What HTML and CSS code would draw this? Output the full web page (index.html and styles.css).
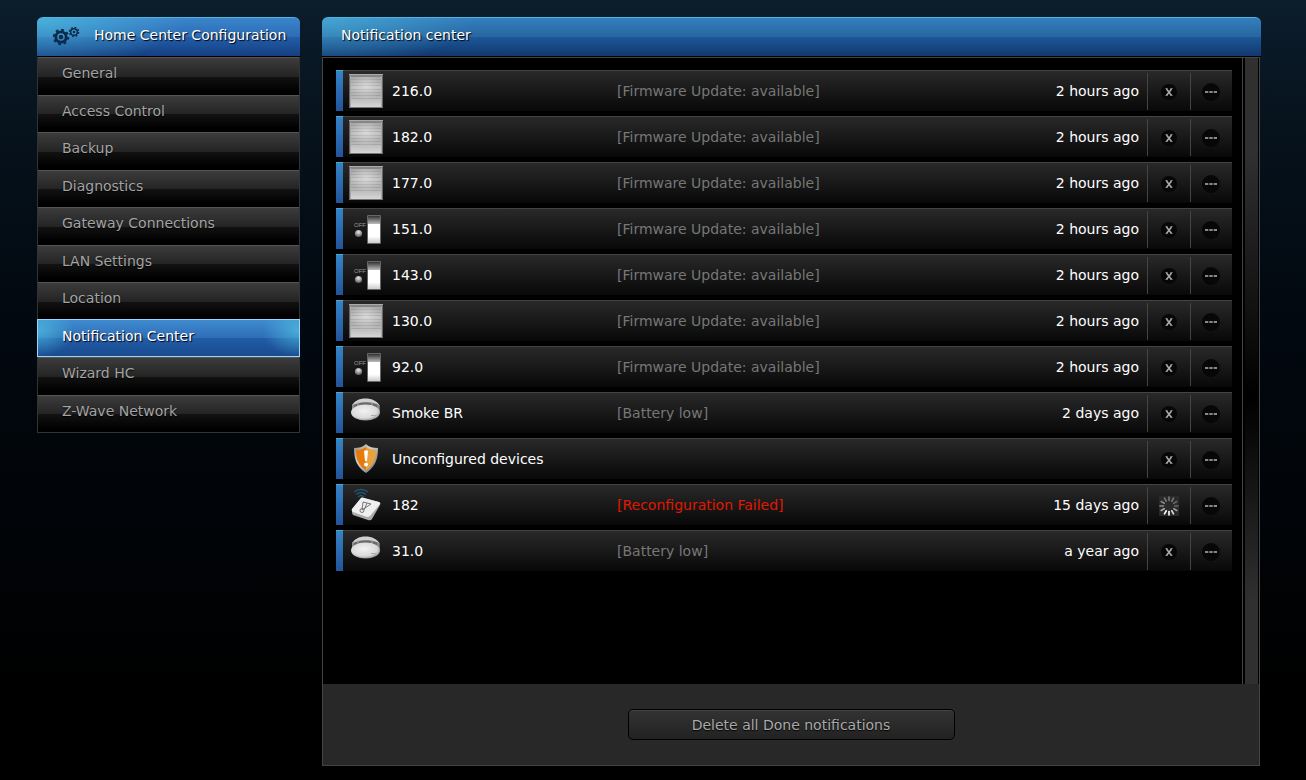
FILE: index.html
```html
<!DOCTYPE html>
<html lang="en">
<head>
<meta charset="utf-8">
<title>Home Center Configuration</title>
<link rel="stylesheet" href="styles.css">
</head>
<body>
<svg class="defs" aria-hidden="true">
  <defs>
    <linearGradient id="blind" x1="0" y1="0" x2="0" y2="1">
      <stop offset="0" stop-color="#a5a5a5"/><stop offset=".35" stop-color="#c0c0c0"/><stop offset=".6" stop-color="#b0b0b0"/><stop offset="1" stop-color="#d6d6d6"/>
    </linearGradient>
    <radialGradient id="shine" cx=".5" cy=".3" r=".5">
      <stop offset="0" stop-color="#fff" stop-opacity=".4"/><stop offset="1" stop-color="#fff" stop-opacity="0"/>
    </radialGradient>
    <linearGradient id="rocker" x1="0" y1="0" x2="0" y2="1">
      <stop offset="0" stop-color="#333"/><stop offset=".28" stop-color="#b5b5b5"/><stop offset=".31" stop-color="#fff"/><stop offset=".75" stop-color="#fff"/><stop offset="1" stop-color="#ccc"/>
    </linearGradient>
    <radialGradient id="led" cx=".5" cy=".3" r=".7">
      <stop offset="0" stop-color="#eee"/><stop offset="1" stop-color="#555"/>
    </radialGradient>
    <radialGradient id="dome" cx=".45" cy=".4" r=".6">
      <stop offset="0" stop-color="#f2f2f2"/><stop offset=".75" stop-color="#dadada"/><stop offset="1" stop-color="#999"/>
    </radialGradient>
    <linearGradient id="rim" x1="0" y1="0" x2="1" y2="1">
      <stop offset="0" stop-color="#888"/><stop offset=".4" stop-color="#d2d2d2"/><stop offset="1" stop-color="#666"/>
    </linearGradient>
    <symbol id="i-blind" viewBox="0 0 34 34">
      <rect width="34" height="34" fill="#777"/>
      <rect width="34" height="1" fill="#aaa"/>
      <rect x="1" y="1" width="32" height="2" fill="#8a8487"/>
      <rect x="2" y="3" width="30" height="30" fill="url(#blind)"/>
      <path d="M2 5.5h30M2 8.5h30M2 11.5h30M2 15.5h30M2 18.5h30M2 21.5h30M2 24.5h30" stroke="#888" stroke-opacity=".4"/>
      <path d="M.5 1v32M33.5 1v32" stroke="#666"/><path d="M1.5 2v31M32.5 2v31" stroke="#aaa"/>
      <rect x="2" y="3" width="30" height="30" fill="url(#shine)"/>
    </symbol>
    <symbol id="i-switch" viewBox="0 -2 34 34">
      <text x="5" y="13" font-family="Liberation Sans, sans-serif" font-size="6" fill="#999">OFF</text>
      <circle cx="9.500" cy="19.500" r="3.600" fill="url(#led)"/>
      <rect x="18" y="1" width="14" height="29" rx="1" fill="#666"/>
      <rect x="19" y="2" width="12" height="27" fill="url(#rocker)"/>
    </symbol>
    <symbol id="i-smoke" viewBox="0 -2 34 34">
      <path d="M3 13V8C5 3 10 1 16.500 1S28 3 31 8v5z" fill="#6a6a6a"/>
      <path d="M3 8C5 3 10 0.500 16.500 0.500S28 3 31 8C25 3 9 3 3 8z" fill="#d0d0d0"/>
      <path d="M4 6v6M9 4v5M23 4v5M29 6v6" stroke="#aaa"/>
      <ellipse cx="16.500" cy="14.500" rx="14.500" ry="8" fill="url(#dome)"/>
      <path d="M22 17.500h5" stroke="#aaa"/>
    </symbol>
    <symbol id="i-shield" viewBox="0 -2 34 34">
      <path d="M17 0C14 3 9 4 5 4c0 12 3 19 12 25C26 23 29 16 29 4 24 4 20 3 17 0z" fill="url(#rim)"/>
      <path d="M17 3c-3 2-6 3-10 3 0 10 3 16 10 20z" fill="#e8790b"/>
      <path d="M17 3c3 2 6 3 10 3 0 10-3 16-10 20z" fill="#e9a23b"/>
      <path d="M15 7q2-1.500 4 0l-1 10h-2z" fill="#fff"/><circle cx="17" cy="20.500" r="2" fill="#fff"/>
    </symbol>
    <symbol id="i-module" viewBox="0 -2 34 34">
      <g fill="none" stroke="#1f5674" stroke-width="1.300"><path d="M5 2q7-5 14 0M7 4.500q5-4 10 0M9 7q3-3 6 0"/></g>
      <path d="M3 19L12 8q1-1 3 0l15 4q2 1 1 3l-8 14q-1 2-4 1L4 25q-1-1-1-3z" fill="#aaa"/>
      <path d="M3 19L12 8q1-1 3 0l15 4q2 1 1 2l-10 12q-1 1-3 1L4 22q-2-1-1-3z" fill="#efefef"/>
      <g fill="none" stroke="#777"><circle cx="13" cy="20.500" r="2"/><path d="M13 20l1-8 8 2zM15 20l3-7"/></g>
    </symbol>
    <symbol id="i-close" viewBox="0 0 18 18">
      <circle cx="9" cy="9" r="8" fill="#070707"/>
      <path d="M6.500 6l5 6.500M11.500 6l-5 6.500" stroke="#aaa" stroke-width="1.600" fill="none"/>
      <path d="M5.500 5.500h2M10.500 5.500h2M5.500 12.500h2M10.500 12.500h2" stroke="#888" stroke-width="1"/>
    </symbol>
    <symbol id="i-more" viewBox="0 0 18 18">
      <circle cx="9" cy="9" r="9" fill="#070707"/>
      <path d="M3 9h12" stroke="#555" stroke-width="1"/>
      <path d="M3 9h3M7.500 9h3M12 9h3" stroke="#888" stroke-width="2"/>
    </symbol>
    <symbol id="i-spin" viewBox="0 0 20 20">
      <rect width="20" height="20" fill="#2a2a2a"/>
      <g stroke-width="1.600" stroke-linecap="round">
        <path d="M10 1v3.500" stroke="#777"/>
        <path d="M10 1v3.500" stroke="#777" transform="rotate(30 10 10)"/>
        <path d="M10 1v3.500" stroke="#666" transform="rotate(60 10 10)"/>
        <path d="M10 1v3.500" stroke="#666" transform="rotate(90 10 10)"/>
        <path d="M10 1v3.500" stroke="#999" transform="rotate(120 10 10)"/>
        <path d="M10 1v3.500" stroke="#ddd" transform="rotate(150 10 10)"/>
        <path d="M10 1v3.500" stroke="#fff" transform="rotate(180 10 10)"/>
        <path d="M10 1v3.500" stroke="#fff" transform="rotate(210 10 10)"/>
        <path d="M10 1v3.500" stroke="#aaa" transform="rotate(240 10 10)"/>
        <path d="M10 1v3.500" stroke="#888" transform="rotate(270 10 10)"/>
        <path d="M10 1v3.500" stroke="#888" transform="rotate(300 10 10)"/>
        <path d="M10 1v3.500" stroke="#777" transform="rotate(330 10 10)"/>
      </g>
    </symbol>
  </defs>
</svg>
<div class="page">
  <nav class="sidebar" aria-label="Home Center Configuration">
    <h2 class="bar">
      <svg class="gears" viewBox="0 0 28 20" aria-hidden="true" fill="none" stroke="#0c2c4b">
        <circle cx="9" cy="11" r="5.200" stroke-width="2.800"/>
        <circle cx="9" cy="11" r="7.200" stroke-width="2" stroke-dasharray="2.800 2.850"/>
        <circle cx="9" cy="11" r="2.300" fill="#0c2c4b" stroke="none"/>
        <circle cx="22" cy="6" r="3.300" stroke-width="1.500"/>
        <circle cx="22" cy="6" r="4.600" stroke-width="1.400" stroke-dasharray="1.800 1.810"/>
        <circle cx="22" cy="6" r="1.300" fill="#0c2c4b" stroke="none"/>
      </svg>
      <span>Home Center Configuration</span>
    </h2>
    <ul class="menu">
      <li><a href="#">General</a></li>
      <li><a href="#">Access Control</a></li>
      <li><a href="#">Backup</a></li>
      <li><a href="#">Diagnostics</a></li>
      <li><a href="#">Gateway Connections</a></li>
      <li><a href="#">LAN Settings</a></li>
      <li><a href="#">Location</a></li>
      <li><a href="#" class="active" aria-current="page">Notification Center</a></li>
      <li><a href="#">Wizard HC</a></li>
      <li><a href="#">Z-Wave Network</a></li>
    </ul>
  </nav>
  <main class="panel">
    <h1 class="bar wide">Notification center</h1>
    <div class="content">
      <ul class="list" id="list"></ul>
      <div class="track"></div>
    </div>
    <footer class="footer"><button type="button" class="delete">Delete all Done notifications</button></footer>
  </main>
</div>
<script src="app.js"></script>
</body>
</html>
```
FILE: app.js
```js
const FW = "[Firmware Update: available]";
const rows = [
  ["blind", "216.0", FW, "2 hours ago"],
  ["blind", "182.0", FW, "2 hours ago"],
  ["blind", "177.0", FW, "2 hours ago"],
  ["switch", "151.0", FW, "2 hours ago"],
  ["switch", "143.0", FW, "2 hours ago"],
  ["blind", "130.0", FW, "2 hours ago"],
  ["switch", "92.0", FW, "2 hours ago"],
  ["smoke", "Smoke BR", "[Battery low]", "2 days ago"],
  ["shield", "Unconfigured devices", "", ""],
  ["module", "182", "[Reconfiguration Failed]", "15 days ago", true],
  ["smoke", "31.0", "[Battery low]", "a year ago"]
];
document.getElementById("list").innerHTML = rows.map(([icon, name, msg, time, failed]) => `
  <li class="row">
    <svg class="device" aria-hidden="true"><use href="#i-${icon}"/></svg>
    <span class="name">${name}</span>
    <span class="msg${failed ? " failed" : ""}">${msg}</span>
    <time class="time">${time}</time>
    <button type="button" class="act" aria-label="${failed ? "Working" : "Dismiss"}"><svg class="${failed ? "spin" : "close"}"><use href="#i-${failed ? "spin" : "close"}"/></svg></button>
    <button type="button" class="act last" aria-label="More"><svg class="more"><use href="#i-more"/></svg></button>
  </li>`).join("");
```
FILE: styles.css
```css
* { box-sizing: border-box; }

body {
  margin: 0;
  background: #000 linear-gradient(#0c1d2c 0, #06121c 130px, #020911 300px, #000 700px) no-repeat;
  color: #fff;
  font: 14px/20px "DejaVu Sans", Verdana, sans-serif;
}

.defs { position: absolute; width: 0; height: 0; }

ul { list-style: none; margin: 0; padding: 0; }

.page {
  display: flex;
  align-items: flex-start;
  gap: 22px;
  min-height: 100vh;
  padding: 17px 45px 14px 37px;
}

.sidebar { flex: 0 0 263px; }

.bar {
  display: flex;
  align-items: center;
  height: 40px;
  margin: 0;
  padding: 0 12px 4px 15px;
  border-top: 1px solid #4fb4de;
  border-bottom: 1px solid #000;
  border-radius: 6px 6px 0 0;
  background:
    radial-gradient(150px 50px at 0 0, rgba(80, 195, 225, .7), transparent),
    linear-gradient(#3a85cc, #2d6cb3 50%, #225da9 51%, #163f80);
  font-size: 14px;
  font-weight: normal;
  text-shadow: 1px 1px 1px #001;
  white-space: nowrap;
}

.bar.wide {
  padding-left: 19px;
  background:
    radial-gradient(150px 50px at 0 0, rgba(80, 190, 225, .6), transparent),
    linear-gradient(#337fbf, #28669f 50%, #1c5797 51%, #12376f);
}

.gears { flex: none; width: 28px; height: 20px; margin: 2px 14px 0 0; }

.menu { border: 1px solid #333; border-top: 0; }

.menu a {
  display: block;
  height: 38px;
  padding: 5px 24px;
  border-top: 1px solid #555;
  background: linear-gradient(#3c3c3c, #242424 50%, #121212 51%, #000 90%);
  color: #a4a4a4;
  text-decoration: none;
  text-shadow: 0 1px 1px #000;
}

.menu li:nth-child(even) a { height: 37px; }

.menu a.active,
.menu li:nth-child(even) a.active {
  height: 38px;
  margin: -1px -1px 0;
  padding-top: 6px;
  border: 1px solid #9bd4f5;
  background:
    radial-gradient(36px 26px at 0 30%, rgba(80, 195, 225, .7), transparent),
    radial-gradient(36px 26px at 100% 30%, rgba(80, 195, 225, .7), transparent),
    linear-gradient(#3f8bd0, #2e6db7 50%, #215ca7 51%, #1a4b8f);
  color: #fff;
  text-shadow: 1px 1px 1px #001;
}

.panel {
  flex: 1;
  display: flex;
  flex-direction: column;
  align-self: stretch;
}

.content {
  flex: 1;
  display: flex;
  margin-right: 1px;
  border: 1px solid #444;
  border-bottom: 0;
  background: #000;
}

.list {
  flex: 1;
  display: flex;
  flex-direction: column;
  gap: 5px;
  padding: 12px 11px 12px 13px;
}

.track {
  width: 16px;
  border: solid #000;
  border-width: 0 1px 0 2px;
  background: linear-gradient(#303030 15%, #000 54%, #303030 87%);
  box-shadow: -1px 0 #444;
}

.row {
  display: grid;
  grid-template-columns: 49px 225px 1fr auto 43px 42px;
  align-items: center;
  height: 41px;
  padding-left: 7px;
  border-top: 1px solid #444;
  background:
    linear-gradient(#3583c6, #22549a) 0 0 / 7px 100% no-repeat,
    linear-gradient(#292929, #080808);
  position: relative;
}

.row::before {
  content: "";
  position: absolute;
  left: 0;
  top: -1px;
  width: 7px;
  height: 1px;
  background: #41acd0;
}

.device { width: 34px; height: 34px; margin-left: 6px; }

.msg { color: #777; }
.msg.failed { color: #e01800; }
.time { padding-right: 8px; }

.act {
  display: flex;
  align-items: center;
  justify-content: center;
  height: 37px;
  padding: 2px 0 0;
  border: 0;
  border-left: 1px solid #444;
  background: none;
  cursor: pointer;
}

.act.last { padding-right: 2px; }

.close,
.more { width: 18px; height: 18px; }
.spin { width: 20px; height: 20px; }

.footer {
  display: flex;
  justify-content: center;
  margin-right: 1px;
  padding: 25px;
  border: 1px solid #444;
  border-top: 0;
  background: #282828;
}

.delete {
  width: 327px;
  height: 31px;
  border: 1px solid #000;
  border-radius: 5px;
  background: linear-gradient(#333, #222);
  box-shadow: inset 0 1px #444;
  color: #aaa;
  font: inherit;
  text-shadow: 0 1px 1px #000;
}
```
